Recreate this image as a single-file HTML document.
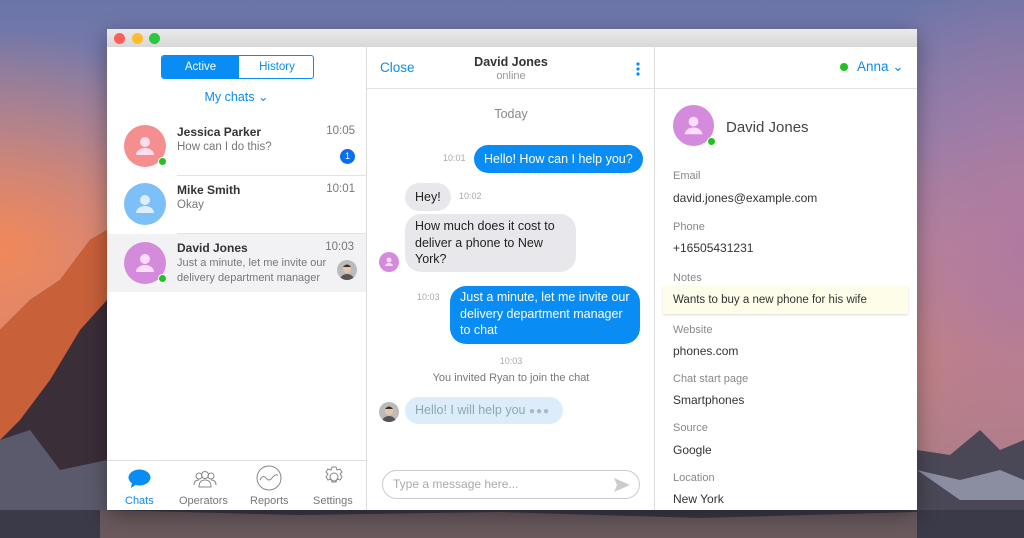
<!DOCTYPE html>
<html><head><meta charset="utf-8"><style>
*{box-sizing:border-box;margin:0;padding:0}
body{width:1024px;height:538px;overflow:hidden;position:relative;font-family:"Liberation Sans",sans-serif;
background:
radial-gradient(ellipse 260px 220px at 0px 250px,#f0885a 0%,rgba(240,130,90,0) 100%),
radial-gradient(ellipse 200px 300px at 1024px 250px,#b07aa0 0%,rgba(180,120,160,0) 100%),
linear-gradient(180deg,#6a75a8 0%,#8a7fae 25%,#b98597 45%,#c98478 65%,#9a7a88 100%);}
.mtn{position:absolute;left:0;top:0;width:1024px;height:538px}
.win{position:absolute;left:107px;top:29px;width:810px;height:481px;background:#fff;box-shadow:0 6px 20px rgba(0,0,0,.35);overflow:hidden}
.tb{height:18px;background:linear-gradient(#eaeaea,#d8d8d8);position:relative}
.dot{position:absolute;top:4px;width:11px;height:11px;border-radius:50%}
.abs{position:absolute}
.blue{color:#0a8cf5}
.av{position:absolute;border-radius:50%;overflow:hidden}
.av svg{width:100%;height:100%}
.on{position:absolute;width:9px;height:9px;border-radius:50%;background:#1fc21f;border:1.5px solid #fff}
.nm{font-weight:bold;font-size:12px;color:#333}
.g{color:#777}
.bub{position:absolute;border-radius:16px;font-size:12.5px;line-height:16.5px;padding:0 10px}
.b{background:#0a8cf5;color:#fff}
.gr{background:#e8e8ec;color:#222}
.lbl{position:absolute;left:18px;font-size:11px;color:#888}
.val{position:absolute;left:18px;font-size:12px;color:#333}
</style></head><body>
<svg class="mtn" viewBox="0 0 1024 538">
<polygon points="0,330 30,300 60,280 90,240 107,230 107,538 0,538" fill="#3a2e38"/>
<polygon points="0,330 30,300 60,280 90,240 107,230 107,300 80,330 50,380 20,420 0,440" fill="#c8603a"/>
<polygon points="0,440 30,430 60,470 107,460 107,538 0,538" fill="#5a5a6c"/>
<polygon points="917,450 950,455 980,430 1000,450 1024,440 1024,538 917,538" fill="#4a4856"/>
<polygon points="917,470 960,480 1000,470 1024,480 1024,500 960,500" fill="#8a8ea0"/>
<rect x="0" y="510" width="1024" height="28" fill="#3a3a48"/>
<polygon points="100,510 300,515 500,512 700,518 917,512 917,538 100,538" fill="#6a5a5e"/>
</svg>
<div class="win">
<div class="tb"><div class="dot" style="left:7px;background:#fc5f57"></div><div class="dot" style="left:25px;background:#fdbc2e"></div><div class="dot" style="left:42px;background:#28c840"></div></div>
<!-- left -->
<div class="abs" style="left:0;top:18px;width:260px;height:463px;border-right:1px solid #ddd">
<div class="abs" style="left:54px;top:8px;width:153px;height:24px;border:1px solid #0a8cf5;border-radius:3px;overflow:hidden;font-size:11.5px">
<div class="abs" style="left:0;top:0;width:77px;height:22px;background:#0a8cf5;color:#fff;text-align:center;line-height:22px">Active</div>
<div class="abs blue" style="left:77px;top:0;width:76px;height:22px;text-align:center;line-height:22px">History</div></div>
<div class="abs blue" style="width:213px;top:42px;text-align:center;font-size:12.5px;left:23px">My chats ⌄</div>
<div class="abs" style="left:0;top:70px;width:260px;height:58px">
<div class="av" style="left:17px;top:8px;width:42px;height:42px;background:#f58e8e"><svg viewBox="0 0 42 42"><circle cx="21" cy="17" r="5" fill="#fde"/><path d="M12 30a9 7 0 0 1 18 0z" fill="#fde"/></svg></div><div class="on" style="left:51px;top:40px"></div>
<div class="abs nm" style="left:70px;top:8px">Jessica Parker</div><div class="abs g" style="left:70px;top:24px;font-size:11.5px">How can I do this?</div>
<div class="abs g" style="right:12px;top:8px;font-size:11.5px">10:05</div>
<div class="abs" style="right:12px;top:32px;width:15px;height:15px;border-radius:50%;background:#0a6ef5;color:#fff;font-size:9px;text-align:center;line-height:15px">1</div>
</div>
<div class="abs" style="left:70px;top:128px;width:190px;border-top:1px solid #e3e3e3"></div>
<div class="abs" style="left:0;top:128px;width:260px;height:58px">
<div class="av" style="left:17px;top:8px;width:42px;height:42px;background:#7cc0f7"><svg viewBox="0 0 42 42"><circle cx="21" cy="17" r="5" fill="#def"/><path d="M12 30a9 7 0 0 1 18 0z" fill="#def"/></svg></div>
<div class="abs nm" style="left:70px;top:8px">Mike Smith</div><div class="abs g" style="left:70px;top:24px;font-size:11.5px">Okay</div>
<div class="abs g" style="right:12px;top:8px;font-size:11.5px">10:01</div></div>
<div class="abs" style="left:70px;top:186px;width:190px;border-top:1px solid #e3e3e3"></div>
<div class="abs" style="left:0;top:187px;width:259px;height:58px;background:#f2f2f4">
<div class="av" style="left:17px;top:8px;width:42px;height:42px;background:#d48bdb"><svg viewBox="0 0 42 42"><circle cx="21" cy="17" r="5" fill="#fdf"/><path d="M12 30a9 7 0 0 1 18 0z" fill="#fdf"/></svg></div><div class="on" style="left:51px;top:40px"></div>
<div class="abs nm" style="left:70px;top:7px">David Jones</div><div class="abs g" style="left:70px;top:22px;font-size:11px;line-height:15px">Just a minute, let me invite our<br>delivery department manager</div>
<div class="abs g" style="right:12px;top:7px;font-size:11.5px">10:03</div>
<div class="av" style="left:230px;top:26px;width:20px;height:20px;background:#bbb"><svg viewBox="0 0 20 20"><circle cx="10" cy="9" r="4" fill="#e8c4a8"/><path d="M6 7q4-5 8 0" fill="#333"/><path d="M3 20a7 6 0 0 1 14 0z" fill="#555"/></svg></div>
</div>
<div class="abs" style="left:0;top:413px;width:260px;border-top:1px solid #ddd;height:50px;font-size:11px;color:#777">
<svg class="abs" style="left:21px;top:8px" width="23" height="20" viewBox="0 0 23 20"><ellipse cx="11.5" cy="8.5" rx="11" ry="8" fill="#0a8cf5"/><path d="M4 13l-1 6 6-4z" fill="#0a8cf5"/></svg>
<div class="abs blue" style="left:18px;top:34px">Chats</div>
<svg class="abs" style="left:85px;top:8px" width="26" height="20" viewBox="0 0 26 20" fill="none" stroke="#888" stroke-width="1"><circle cx="7" cy="7" r="3"/><circle cx="13" cy="6" r="3.5"/><circle cx="19" cy="7" r="3"/><path d="M2 16q0-5 5-5M24 16q0-5-5-5M7 18q0-7 6-7t6 7z"/></svg>
<div class="abs" style="left:72px;top:34px">Operators</div>
<svg class="abs" style="left:149px;top:4px" width="26" height="26" viewBox="0 0 26 26" fill="none" stroke="#888" stroke-width="1"><circle cx="13" cy="13" r="12"/><path d="M4 15q3-6 6-2t6 0 6-3"/></svg>
<div class="abs" style="left:143px;top:34px">Reports</div>
<svg class="abs" style="left:216px;top:5px" width="22" height="22" viewBox="0 0 22 22" fill="none" stroke="#888" stroke-width="1"><circle cx="11" cy="11" r="4"/><path d="M9 1h4l1 3 3-1 2 3-2 2 2 3-2 3-3-1-1 3h-4l-1-3-3 1-2-3 2-3-2-2 2-3 3 1z"/></svg>
<div class="abs" style="left:206px;top:34px">Settings</div>
</div>
</div>
<!-- middle -->
<div class="abs" style="left:260px;top:18px;width:288px;height:463px;border-right:1px solid #ddd">
<div class="abs" style="left:0;top:0;width:288px;height:42px;border-bottom:1px solid #e3e3e3">
<div class="abs blue" style="left:13px;top:13px;font-size:13.5px">Close</div>
<div class="abs nm" style="left:0;width:288px;text-align:center;top:8px;font-size:12.5px">David Jones</div>
<div class="abs g" style="left:0;width:288px;text-align:center;top:23px;font-size:11px;color:#999">online</div>
<svg class="abs" style="left:269px;top:15px" width="4" height="14"><circle cx="2" cy="2" r="1.6" fill="#0a8cf5"/><circle cx="2" cy="7" r="1.6" fill="#0a8cf5"/><circle cx="2" cy="12" r="1.6" fill="#0a8cf5"/></svg>
</div>
<div class="abs" style="left:0;width:288px;text-align:center;top:60px;font-size:12.5px;color:#888">Today</div>
<div class="abs" style="left:76px;top:106px;font-size:9px;color:#aaa">10:01</div>
<div class="bub b" style="left:107px;top:98px;height:28px;line-height:28px">Hello! How can I help you?</div>
<div class="bub gr" style="left:38px;top:136px;height:28px;line-height:28px">Hey!</div>
<div class="abs" style="left:92px;top:144px;font-size:9px;color:#aaa">10:02</div>
<div class="bub gr" style="left:38px;top:167px;width:171px;height:58px;padding-top:4px">How much does it cost to deliver a phone to New York?</div>
<div class="av" style="left:12px;top:205px;width:20px;height:20px;background:#d48bdb"><svg viewBox="0 0 20 20"><circle cx="10" cy="8" r="2.5" fill="#fdf"/><path d="M6 14a4 3 0 0 1 8 0z" fill="#fdf"/></svg></div>
<div class="abs" style="left:50px;top:245px;font-size:9px;color:#aaa">10:03</div>
<div class="bub b" style="left:83px;top:239px;width:190px;height:58px;padding-top:3px">Just a minute, let me invite our delivery department manager to chat</div>
<div class="abs" style="left:0;width:288px;text-align:center;top:309px;font-size:9px;color:#aaa">10:03</div>
<div class="abs" style="left:0;width:288px;text-align:center;top:325px;font-size:11px;color:#777">You invited Ryan to join the chat</div>
<div class="av" style="left:12px;top:355px;width:20px;height:20px;background:#bbb"><svg viewBox="0 0 20 20"><circle cx="10" cy="9" r="4" fill="#e8c4a8"/><path d="M6 7q4-5 8 0" fill="#333"/><path d="M3 20a7 6 0 0 1 14 0z" fill="#555"/></svg></div>
<div class="bub" style="left:38px;top:350px;height:27px;line-height:27px;background:#dcecfb;color:#8aa;width:158px;white-space:nowrap">Hello! I will help you <span style="color:#a8b8c8;letter-spacing:1px;font-size:10px">●●●</span></div>
<div class="abs" style="left:15px;top:423px;width:258px;height:29px;border:1px solid #ccc;border-radius:15px;font-size:12px;color:#aaa;line-height:27px;padding-left:10px">Type a message here...
<svg class="abs" style="right:9px;top:7px" width="16" height="14"><path d="M0 0l16 7-16 7 3-7z" fill="#ccc"/></svg></div>
</div>
<!-- right -->
<div class="abs" style="left:548px;top:18px;width:262px;height:463px">
<div class="abs" style="left:0;top:0;width:262px;height:42px;border-bottom:1px solid #e3e3e3">
<div class="abs" style="left:185px;top:16px;width:8px;height:8px;border-radius:50%;background:#1fc21f"></div>
<div class="abs blue" style="left:202px;top:12px;font-size:13.5px">Anna ⌄</div></div>
<div class="av" style="left:18px;top:58px;width:41px;height:41px;background:#d48bdb"><svg viewBox="0 0 42 42"><circle cx="21" cy="17" r="5" fill="#fdf"/><path d="M12 30a9 7 0 0 1 18 0z" fill="#fdf"/></svg></div><div class="on" style="left:52px;top:90px"></div>
<div class="abs" style="left:71px;top:72px;font-size:15px;color:#444">David Jones</div>
<div class="lbl" style="top:123px">Email</div><div class="val" style="top:144px">david.jones@example.com</div>
<div class="lbl" style="top:174px">Phone</div><div class="val" style="top:194px">+16505431231</div>
<div class="lbl" style="top:225px">Notes</div>
<div class="abs" style="left:8px;top:239px;width:245px;height:28px;background:#fdfdea;box-shadow:0 1px 2px rgba(0,0,0,.15);font-size:11.5px;color:#333;line-height:28px;padding-left:10px">Wants to buy a new phone for his wife</div>
<div class="lbl" style="top:277px">Website</div><div class="val" style="top:297px">phones.com</div>
<div class="lbl" style="top:326px">Chat start page</div><div class="val" style="top:346px">Smartphones</div>
<div class="lbl" style="top:375px">Source</div><div class="val" style="top:396px">Google</div>
<div class="lbl" style="top:425px">Location</div><div class="val" style="top:445px">New York</div>
</div>
</div>
</body></html>
